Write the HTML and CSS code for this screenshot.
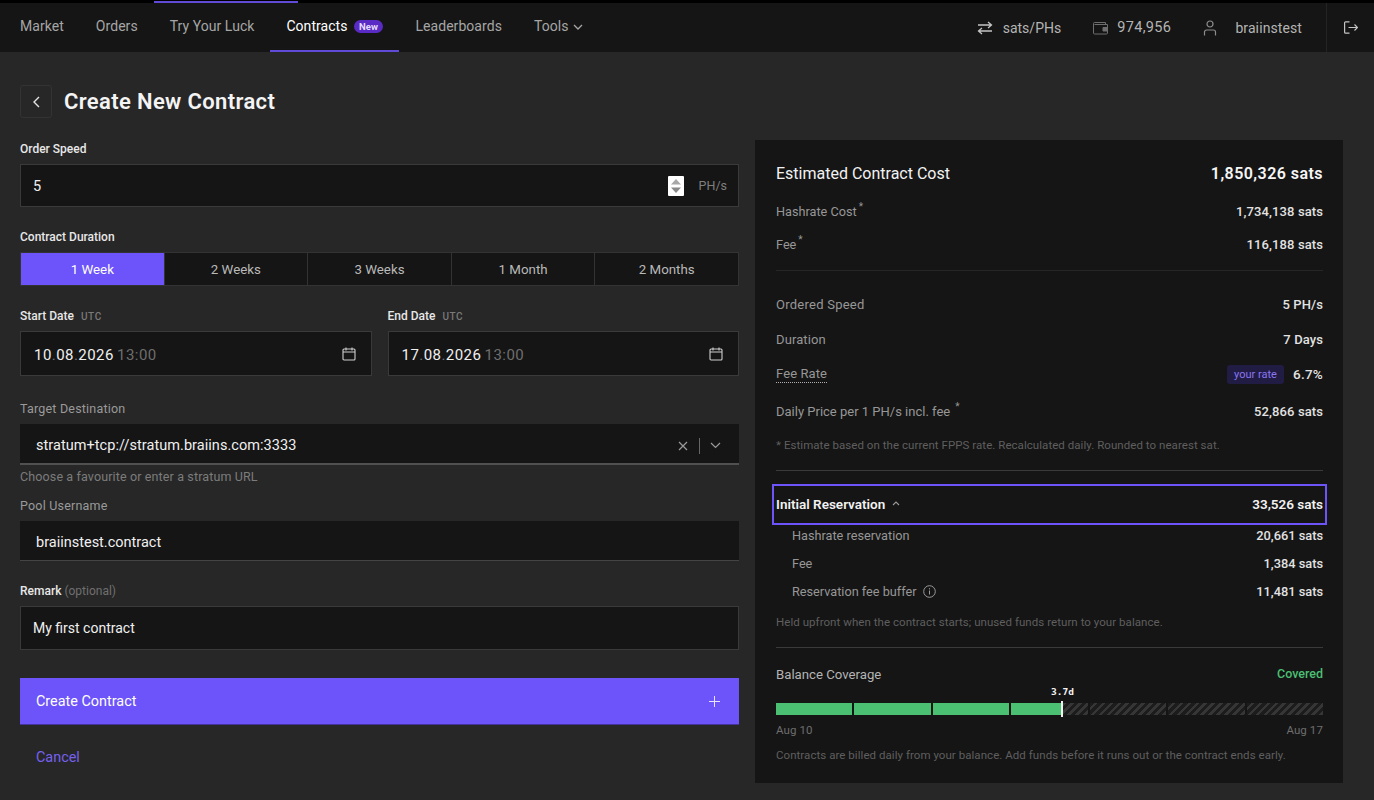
FILE: index.html
```html
<!DOCTYPE html>
<html lang="en">
<head>
<meta charset="utf-8">
<title>Create New Contract</title>
<link rel="stylesheet" href="styles.css">
</head>
<body>
<header class="topbar">
  <span class="topbar-accent"></span>
  <nav class="nav">
    <a class="nav-item">Market</a>
    <a class="nav-item">Orders</a>
    <a class="nav-item">Try Your Luck</a>
    <a class="nav-item active">Contracts <span class="pill">New</span></a>
    <a class="nav-item">Leaderboards</a>
    <a class="nav-item">Tools
      <svg class="nav-chevron" width="10" height="6" viewBox="0 0 10 6"><path d="M1 1l4 4 4-4" fill="none" stroke="currentColor" stroke-width="1.3"/></svg>
    </a>
  </nav>
  <div class="top-right">
    <div class="top-item unit">
      <svg width="16" height="14" viewBox="0 0 16 14" fill="none" stroke="#c4c4c4" stroke-width="1.3"><path d="M1 4h13.500M11 1l3.500 3L11 7M15 10H1.500M5 7l-3.500 3L5 13"/></svg>
      <span>sats/PHs</span>
    </div>
    <div class="top-item wallet">
      <svg width="15" height="14" viewBox="0 0 15 14" fill="none" stroke="#6e6e6e" stroke-width="1"><path d="M12.500 3V1.500h-11a1 1 0 0 0-1 1v9.500a1 1 0 0 0 1 1h12a1 1 0 0 0 1-1V3.500h-13"/><path d="M14.500 6.500H10v3.500h4.500" fill="#6e6e6e"/></svg>
      <span class="balance">974,956</span>
    </div>
    <div class="top-item user">
      <svg width="14" height="16" viewBox="0 0 14 16" fill="none" stroke="#8c8c8c" stroke-width="1.200"><circle cx="7" cy="4" r="3"/><path d="M1.500 15.500V12a2 2 0 0 1 2-2h7a2 2 0 0 1 2 2v3.500"/></svg>
      <span>braiinstest</span>
    </div>
    <div class="logout">
      <svg width="14" height="13" viewBox="0 0 14 13" fill="none" stroke="#c4c4c4" stroke-width="1.200"><path d="M5.500.8H1.600a1 1 0 0 0-1 1v9.400a1 1 0 0 0 1 1h3.900M4.500 6.500h9M10.500 3.500l3 3-3 3"/></svg>
    </div>
  </div>
</header>

<main class="page">
  <div class="title-row">
    <button class="back">
      <svg width="7" height="12" viewBox="0 0 7 12"><path d="M6 1 1 6l5 5" fill="none" stroke="#e4e4e4" stroke-width="1.400"/></svg>
    </button>
    <h1>Create New Contract</h1>
  </div>

  <div class="columns">
    <section class="form">
      <label class="label">Order Speed</label>
      <div class="input speed">
        <span class="value">5</span>
        <span class="stepper">
          <svg width="16" height="20" viewBox="0 0 16 20"><path d="M3 8.500 8 3l5 5.500z" fill="#a8a8a8"/><path d="M3 11.500h10L8 17z" fill="#8a8a8a"/></svg>
        </span>
        <span class="suffix">PH/s</span>
      </div>

      <label class="label f-duration">Contract Duration</label>
      <div class="tabs">
        <div class="tab selected">1 Week</div>
        <div class="tab">2 Weeks</div>
        <div class="tab">3 Weeks</div>
        <div class="tab">1 Month</div>
        <div class="tab">2 Months</div>
      </div>

      <div class="dates">
        <div class="date-field">
          <label class="label">Start Date <span class="utc">UTC</span></label>
          <div class="input date">
            <span class="date-val">10<i>.</i>08<i>.</i>2026 <em>13:00</em></span>
            <svg width="14" height="14" viewBox="0 0 14 14" fill="none" stroke="#cfcfcf" stroke-width="1.100"><rect x="1" y="2" width="12" height="11" rx="1"/><path d="M1 5h12M4 .5v3M10 .5v3"/></svg>
          </div>
        </div>
        <div class="date-field">
          <label class="label">End Date <span class="utc">UTC</span></label>
          <div class="input date">
            <span class="date-val">17<i>.</i>08<i>.</i>2026 <em>13:00</em></span>
            <svg width="14" height="14" viewBox="0 0 14 14" fill="none" stroke="#cfcfcf" stroke-width="1.100"><rect x="1" y="2" width="12" height="11" rx="1"/><path d="M1 5h12M4 .5v3M10 .5v3"/></svg>
          </div>
        </div>
      </div>

      <label class="label muted f-target">Target Destination</label>
      <div class="filled target">
        <span class="value">stratum+tcp://stratum.braiins.com:3333</span>
        <svg class="clear" width="10" height="10" viewBox="0 0 10 10"><path d="M1 1l8 8M9 1 1 9" stroke="#9a9a9a" stroke-width="1.200"/></svg>
        <span class="sep"></span>
        <svg class="drop" width="11" height="7" viewBox="0 0 11 7"><path d="M1 1l4.500 4.500L10 1" fill="none" stroke="#9a9a9a" stroke-width="1.200"/></svg>
      </div>
      <p class="helper">Choose a favourite or enter a stratum URL</p>

      <label class="label muted f-pool">Pool Username</label>
      <div class="filled pool"><span class="value">braiinstest.contract</span></div>

      <label class="label f-remark">Remark <span class="optional">(optional)</span></label>
      <div class="input remark"><span class="value">My first contract</span></div>

      <button class="submit">
        <span>Create Contract</span>
        <svg width="11" height="11" viewBox="0 0 11 11"><path d="M5.500 0v11M0 5.500h11" stroke="#e8e4ff" stroke-width="1"/></svg>
      </button>
      <a class="cancel">Cancel</a>
    </section>

    <aside class="panel">
      <div class="row headline"><span>Estimated Contract Cost</span><strong>1,850,326 sats</strong></div>
      <div class="group g-cost">
        <div class="row"><span class="k">Hashrate Cost <sup>*</sup></span><span class="v">1,734,138 sats</span></div>
        <div class="row"><span class="k">Fee <sup>*</sup></span><span class="v">116,188 sats</span></div>
      </div>
      <hr class="rule faint r1">
      <div class="row r-speed"><span class="k wide">Ordered Speed</span><span class="v">5 PH/s</span></div>
      <div class="row r-gap15"><span class="k">Duration</span><span class="v">7 Days</span></div>
      <div class="row r-gap15"><span class="k dotted">Fee Rate</span><span class="v rate"><span class="your-rate">your rate</span>6.7%</span></div>
      <div class="row r-gap17"><span class="k tight">Daily Price per 1 PH/s incl. fee <sup>*</sup></span><span class="v">52,866 sats</span></div>
      <p class="note n1">* Estimate based on the current FPPS rate. Recalculated daily. Rounded to nearest sat.</p>
      <hr class="rule n-rule">
      <div class="reservation">
        <span class="res-title">Initial Reservation
          <svg width="8" height="5" viewBox="0 0 8 5"><path d="M1 4l3-3 3 3" fill="none" stroke="#9a9a9a" stroke-width="1.100"/></svg>
        </span>
        <span class="res-val">33,526 sats</span>
      </div>
      <div class="sub">
        <div class="row"><span class="k">Hashrate reservation</span><span class="v">20,661 sats</span></div>
        <div class="row"><span class="k">Fee</span><span class="v">1,384 sats</span></div>
        <div class="row"><span class="k">Reservation fee buffer
          <svg class="info" width="13" height="13" viewBox="0 0 13 13" fill="none" stroke="#9a9a9a"><circle cx="6.500" cy="6.500" r="5.800"/><path d="M6.500 5.500v4M6.500 3.200v1.200"/></svg></span><span class="v">11,481 sats</span></div>
      </div>
      <p class="note n2">Held upfront when the contract starts; unused funds return to your balance.</p>
      <hr class="rule n-rule">
      <div class="row r-balance"><span class="k light">Balance Coverage</span><span class="covered">Covered</span></div>
      <div class="bar">
        <span class="bar-label">3.7d</span>
        <span class="bar-marker"></span>
        <span class="seg full"></span>
        <span class="seg full"></span>
        <span class="seg full"></span>
        <span class="seg partial"></span>
        <span class="seg"></span>
        <span class="seg"></span>
        <span class="seg"></span>
      </div>
      <div class="bar-dates"><span>Aug 10</span><span>Aug 17</span></div>
      <p class="note n3">Contracts are billed daily from your balance. Add funds before it runs out or the contract ends early.</p>
    </aside>
  </div>
</main>
</body>
</html>
```

FILE: styles.css
```css
* { box-sizing: border-box; }
html, body { margin: 0; padding: 0; }
body {
  background: #272727;
  color: #e6e6e6;
  font-family: Roboto, "Liberation Sans", sans-serif;
  font-size: 14px;
  height: 800px;
  overflow: hidden;
}
svg { display: block; flex: none; }

/* top bar */
.topbar {
  position: relative;
  height: 52px;
  background: #151515;
  border-top: 3px solid #000;
  display: flex;
  justify-content: space-between;
  align-items: stretch;
}
.topbar-accent {
  position: absolute;
  left: 154px;
  top: -2px;
  width: 144px;
  height: 2px;
  background: #5f4bd8;
}
.nav { display: flex; padding-left: 4px; }
.nav-item {
  display: flex;
  align-items: center;
  padding: 0 16px;
  color: #a6a6a6;
  font-size: 14px;
  letter-spacing: 0.05px;
  white-space: nowrap;
  margin-bottom: 3px;
}
.nav-item.active {
  color: #fff;
  position: relative;
}
.nav-item.active::after {
  content: "";
  position: absolute;
  left: 0;
  right: 0;
  bottom: -3px;
  height: 2px;
  background: #5f4bd8;
}
.pill {
  margin-left: 6px;
  background: #5a2bc4;
  color: #e4dcff;
  font-size: 9.5px;
  font-weight: 700;
  line-height: 13px;
  padding: 0 5.5px;
  border-radius: 7px;
}
.nav-chevron { margin-left: 5px; margin-top: 1px; }
.top-right { display: flex; align-items: center; color: #b4b4b4; font-size: 14px; }
.top-item { display: flex; align-items: center; }
.unit { gap: 10px; margin-right: 32px; }
.wallet { gap: 9px; margin-right: 32px; }
.balance { font-size: 14.5px; letter-spacing: 0.35px; }
.user { gap: 18px; margin-right: 24px; letter-spacing: 0.1px; }
.logout {
  width: 48px;
  height: 49px;
  border-left: 1px solid #242424;
  display: flex;
  align-items: center;
  padding-left: 17px;
}

/* page */
.page { padding: 33px 0 0 20px; }
.title-row { display: flex; align-items: center; gap: 12px; height: 33px; margin-bottom: 22px; }
.back {
  width: 32px;
  height: 33px;
  padding: 0;
  background: transparent;
  border: 1px solid #333;
  border-radius: 3px;
  display: flex;
  align-items: center;
  justify-content: center;
}
h1 { margin: 0; font-size: 22px; font-weight: 600; color: #f4f4f4; letter-spacing: 0.36px; }
.columns { display: flex; gap: 16px; }

/* form */
.form { width: 719px; display: flex; flex-direction: column; }
.label {
  display: block;
  height: 16px;
  line-height: 18px;
  font-size: 12px;
  font-weight: 500;
  color: #e8e8e8;
  margin-bottom: 8px;
}
.label.muted { color: #9a9a9a; font-size: 12.5px; font-weight: 400; letter-spacing: 0.2px; line-height: 17px; }
.utc { color: #7a7a7a; font-size: 10px; margin-left: 4px; letter-spacing: 0.6px; }
.optional { color: #6f6f6f; font-weight: 400; }
.input {
  background: #151515;
  border: 1px solid #3a3a3a;
  display: flex;
  align-items: center;
}
.value { font-size: 14.5px; color: #f0f0f0; }
.speed { height: 43px; padding: 0 11px 0 12px; }
.speed .value { flex: 1; padding-top: 2px; }
.stepper { width: 16px; height: 20px; background: #fff; border-radius: 1px; margin-right: 15px; }
.suffix { color: #7f7f7f; font-size: 12.5px; }
.f-duration { margin-top: 21px; }
.tabs { display: flex; height: 34px; background: #151515; border: 1px solid #333; }
.tab {
  flex: 1;
  display: flex;
  align-items: center;
  justify-content: center;
  color: #b9b9b9;
  font-size: 13.3px;
  border-left: 1px solid #333;
}
.tab.selected { background: #6c53fa; color: #fff; border-left: 0; }
.dates { display: flex; gap: 16px; margin-top: 21px; }
.date-field { flex: 1; }
.date { height: 45px; padding: 0 15px 0 13px; justify-content: space-between; }
.date-val { font-size: 15px; color: #f0f0f0; letter-spacing: 0.45px; padding-top: 2px; }
.date-val i { font-style: normal; color: #777; }
.date-val em { font-style: normal; color: #6e6e6e; margin-left: -1px; }
.f-target { margin-top: 24px; }
.filled {
  background: #151515;
  display: flex;
  align-items: center;
  padding: 4px 16px 0;
}
.target { height: 41px; border-bottom: 2px solid #505050; }
.target .value { flex: 1; letter-spacing: 0.05px; }
.sep { width: 1px; height: 16px; background: #666; margin: 0 10px 0 11px; }
.drop { margin-right: 2px; }
.helper { margin: 4px 0 0; height: 16px; line-height: 16px; font-size: 12.5px; color: #7c7c7c; letter-spacing: 0.13px; }
.f-pool { margin-top: 12px; }
.pool { height: 40px; border-bottom: 1px solid #444; }
.f-remark { margin-top: 21px; }
.remark { height: 44px; padding: 0 12px; }
.remark .value { font-size: 14px; }
.submit {
  margin-top: 28px;
  height: 47px;
  background: #6c53fa;
  border: 0;
  border-bottom: 1px solid #44349c;
  padding: 0 19px 0 16px;
  display: flex;
  align-items: center;
  justify-content: space-between;
  color: #fff;
  font: inherit;
  font-size: 14.4px;
}
.cancel { margin: 24px 0 0 16px; color: #7561ee; font-size: 14.4px; height: 17px; line-height: 17px; }

/* panel */
.panel {
  width: 588px;
  height: 643px;
  background: #151515;
  padding: 20px 20px 0 21px;
}
.row {
  display: flex;
  justify-content: space-between;
  align-items: center;
  height: 20px;
}
.headline { height: 26px; font-size: 16px; color: #f2f2f2; }
.headline strong { font-weight: 600; color: #f6f6f6; letter-spacing: 0.45px; }
.g-cost { margin-top: 15px; display: flex; flex-direction: column; gap: 13px; }
.k { color: #979797; font-size: 13px; letter-spacing: 0.1px; display: flex; gap: 2px; white-space: nowrap; }
.g-cost .k, .sub .k { font-size: 12.7px; letter-spacing: 0; }
.k.wide { letter-spacing: 0.25px; }
.k.tight { letter-spacing: 0; gap: 5px; }
.k.light { color: #b4b4b4; font-size: 13.2px; letter-spacing: 0; margin-top: -1px; }
.v { color: #e2e2e2; font-size: 13px; letter-spacing: 0.1px; font-weight: 500; }
.sub .v { font-size: 12.8px; letter-spacing: 0; }
sup { font-size: 10px; line-height: 1; margin-top: -2px; }
.rule { border: 0; height: 1px; background: #3a3a3a; margin: 0; }
.rule.faint { background: #262626; }
.r1 { margin-top: 16px; }
.r-speed { margin-top: 23px; }
.r-gap15 { margin-top: 15px; }
.r-gap17 { margin-top: 17px; }
.dotted { border-bottom: 1px dotted #b0b0b0; line-height: 16px; }
.rate { display: flex; align-items: center; gap: 9px; font-size: 13.5px; letter-spacing: 0.25px; }
.your-rate {
  background: #211c44;
  color: #8a76f0;
  font-size: 11px;
  font-weight: 400;
  letter-spacing: 0;
  padding: 0 7px;
  height: 19px;
  line-height: 19px;
  border-radius: 3px;
}
.note { margin: 0; height: 16px; line-height: 16px; font-size: 11.5px; color: #5f5f5f; letter-spacing: 0.05px; white-space: nowrap; }
.n1 { margin-top: 16px; }
.n-rule { margin-top: 17px; }
.reservation {
  margin: 13px -4px 0;
  height: 41px;
  border: 2px solid #6c53fa;
  padding: 0 2px 2px;
  display: flex;
  align-items: center;
  justify-content: space-between;
  font-size: 13.5px;
  font-weight: 600;
  color: #f2f2f2;
}
.res-title { display: flex; align-items: center; gap: 7px; white-space: nowrap; }
.sub { padding-left: 16px; display: flex; flex-direction: column; gap: 8px; }
.info { margin: 1px 0 0 4px; }
.n2 { margin-top: 13px; }
.r-balance { margin-top: 17px; }
.covered { color: #4bbf72; font-size: 12.5px; font-weight: 500; margin-top: -3px; }
.bar { position: relative; display: flex; gap: 2px; height: 12px; margin-top: 18px; }
.seg {
  flex: 1;
  background: repeating-linear-gradient(135deg, #1c1c1c 0, #1c1c1c 3px, #363636 3px, #363636 5.6px);
}
.seg.full { background: #4bc073; }
.seg.partial {
  background:
    linear-gradient(#4bc073, #4bc073) left / 67% 100% no-repeat,
    repeating-linear-gradient(135deg, #1c1c1c 0, #1c1c1c 3px, #363636 3px, #363636 5.6px);
}
.bar-marker {
  position: absolute;
  left: 285px;
  top: -2px;
  width: 2px;
  height: 16px;
  background: #f0f0f0;
}
.bar-label {
  position: absolute;
  left: 275px;
  top: -17px;
  font-family: "DejaVu Sans Mono", monospace;
  font-size: 9.5px;
  font-weight: 700;
  line-height: 12px;
  color: #f2f2f2;
}
.bar-dates {
  margin-top: 7px;
  height: 16px;
  line-height: 16px;
  display: flex;
  justify-content: space-between;
  color: #6e6e6e;
  font-size: 11.5px;
  letter-spacing: 0.1px;
}
.n3 { margin-top: 9px; }
```
